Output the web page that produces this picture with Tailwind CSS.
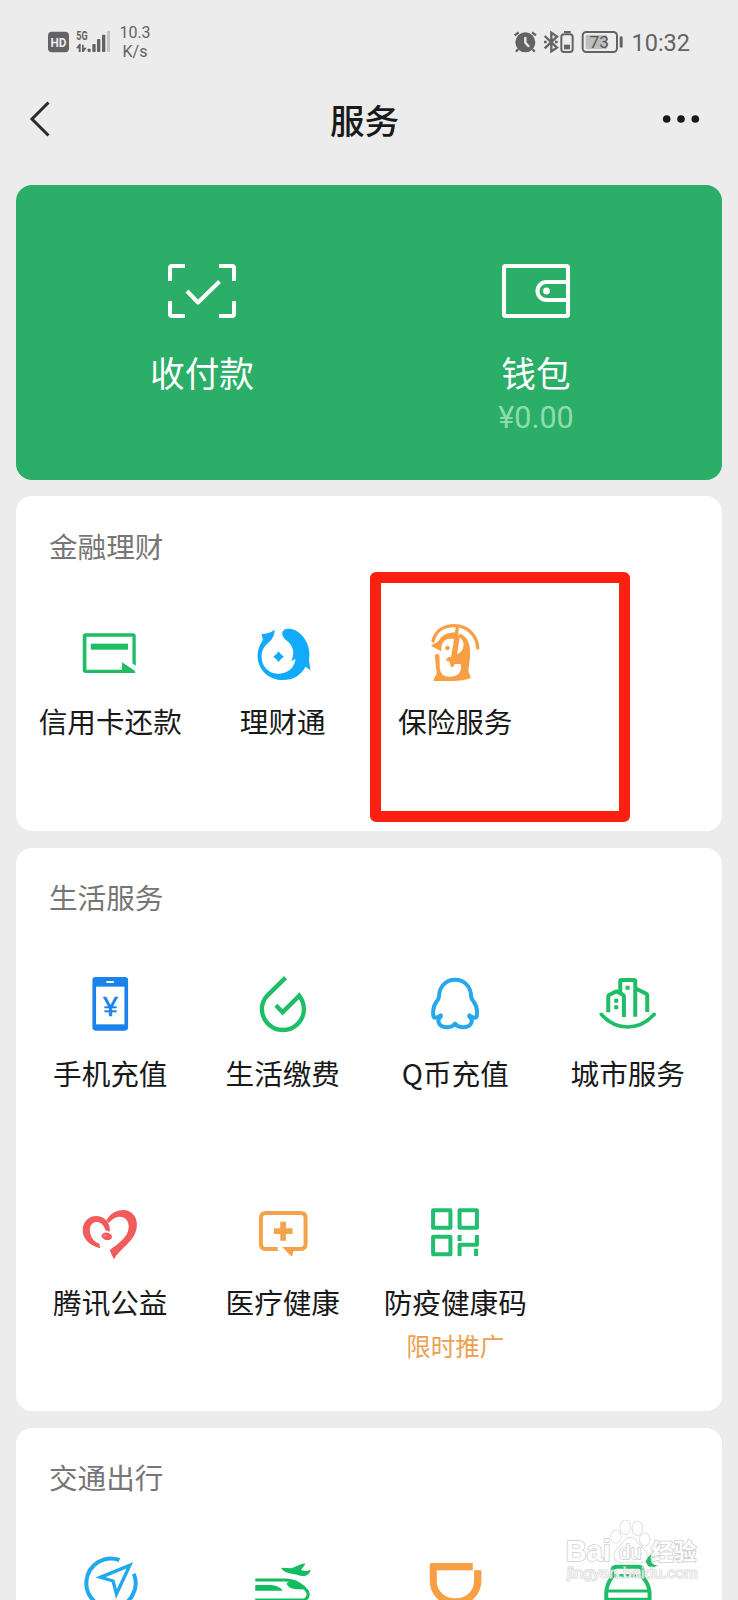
<!DOCTYPE html>
<html lang="zh-CN">
<head>
<meta charset="utf-8">
<title>服务</title>
<script src="https://cdn.jsdelivr.net/npm/@tailwindcss/browser@4"></script>
</head>
<body class="bg-[#ececec]">
<div class="relative flex h-[1600px] w-[738px] flex-col overflow-hidden bg-[#ececec] font-['Noto_Sans_CJK_SC',sans-serif] text-[#191919]">

  <!-- Status bar -->
  <header class="flex h-[84px] shrink-0 items-center justify-between pl-12 pr-[48px] font-['Roboto',sans-serif] text-[#636363]">
    <div class="flex items-center">
      <svg class="h-[34px] w-[64px]" viewBox="144 76 192 102">
        <rect x="144" y="96" width="63" height="62" rx="12" fill="#636363"/>
        <text x="175.500" y="141" font-family="Roboto" font-size="39" font-weight="700" fill="#ececec" text-anchor="middle" textLength="48" lengthAdjust="spacingAndGlyphs">HD</text>
        <text x="229" y="121" font-family="Roboto" font-size="36" font-weight="700" fill="#636363" textLength="34" lengthAdjust="spacingAndGlyphs">5G</text>
        <g fill="#636363">
          <path d="M228 146L238 132H242V157H236V146ZM246 135H251V144H260L251 157H246Z"/>
          <rect x="263" y="147" width="9" height="10" rx="2"/>
          <rect x="277" y="133" width="10" height="24" rx="2"/>
          <rect x="291" y="118" width="10" height="39" rx="2"/>
          <rect x="306" y="105" width="10" height="52" rx="2"/>
          <rect x="321" y="94" width="9" height="63" rx="2" fill="#c4c4c4"/>
        </g>
      </svg>
      <div class="ml-[7px] w-8 pt-px text-center text-[16px] leading-[18.500px]">10.3<br>K/s</div>
    </div>
    <div class="flex items-center">
      <svg class="h-[24px] w-[110px]" viewBox="435 90 330 72" fill="none" stroke="#636363">
        <circle cx="472" cy="127" r="30" fill="#636363" stroke="none"/>
        <path d="M440 106L452 97M504 106L492 97M450 148L444 155M494 148L500 155" stroke-width="7"/>
        <path d="M472 111V128L483 140" stroke="#ececec" stroke-width="7"/>
        <path d="M530 108L567 143L550 154V98L567 110L530 145" stroke-width="7"/>
        <path d="M528 126H536M561 126H569" stroke-width="7"/>
        <rect x="580" y="103" width="34" height="53" rx="8" stroke-width="6"/>
        <path d="M588 96H608" stroke-width="6"/>
        <rect x="588" y="134" width="18" height="14" fill="#636363" stroke="none"/>
        <rect x="644" y="96" width="103" height="60" rx="11" stroke-width="6"/>
        <rect x="653" y="105" width="64" height="42" rx="3" fill="#bdbdbd" stroke="none"/>
        <rect x="755" y="109" width="9" height="34" rx="4" fill="#636363" stroke="none"/>
        <text x="694" y="145" font-family="Roboto" font-size="52" fill="#555" stroke="none" text-anchor="middle">73</text>
      </svg>
      <div class="ml-2 pt-[2px] text-[23.500px] leading-7">10:32</div>
    </div>
  </header>

  <!-- Title bar -->
  <nav class="grid h-[100px] shrink-0 grid-cols-[1fr_auto_1fr] items-start pl-[28px] pr-[38px] pt-[11px]">
    <svg class="mt-1 h-10 w-6" viewBox="0 0 24 40" fill="none" stroke="#2a2a2a" stroke-width="3"><path d="M20.500 3.500L4 20L20.500 36.500"/></svg>
    <h1 class="pl-px text-[34.600px] font-medium leading-[48px]">服务</h1>
    <svg class="mt-3 h-6 w-[38px] justify-self-end" viewBox="0 0 38 24" fill="#191919"><circle cx="4.700" cy="12" r="3.800"/><circle cx="19" cy="12" r="3.800"/><circle cx="33.300" cy="12" r="3.800"/></svg>
  </nav>

  <main class="flex flex-col gap-4 px-4">
    <!-- Payment card -->
    <section class="mt-[0.500px] grid h-[295.500px] grid-cols-2 rounded-2xl bg-[#2bae67] px-[19px] pt-[75.500px] text-white">
      <div class="flex flex-col items-center">
        <svg class="h-[64px] w-[76px]" viewBox="0 0 76 64" fill="none" stroke="#fff" stroke-width="4">
          <path d="M6 21V8Q6 6 8 6H21M55 6H68Q70 6 70 8V21M70 41V54Q70 56 68 56H55M21 56H8Q6 56 6 54V41"/>
          <path d="M23 31L34 42.500L55.500 21.500" stroke-linejoin="round"/>
        </svg>
        <div class="mt-[23.500px] text-[34.700px] leading-[48px]">收付款</div>
      </div>
      <div class="flex flex-col items-center">
        <svg class="h-[64px] w-[76px]" viewBox="0 0 76 64" fill="none" stroke="#fff" stroke-width="4">
          <rect x="6" y="6" width="64" height="50" rx="1.500"/>
          <path d="M70 22H48.500A9 9 0 0 0 48.500 40H70"/>
          <circle cx="48.500" cy="31" r="3.400" fill="#fff" stroke="none"/>
        </svg>
        <div class="mt-[23.500px] text-[34.700px] leading-[48px]">钱包</div>
        <div class="mt-[2px] font-['Roboto',sans-serif] text-[30.500px] leading-10 text-[#8ddcac]">¥0.00</div>
      </div>
    </section>

    <!-- Finance -->
    <section class="relative h-[335px] rounded-2xl bg-white px-2 pt-[30px]">
      <h2 class="pl-[25px] text-[28.600px] leading-10 text-[#767676]">金融理财</h2>
      <div class="mt-[55px] grid grid-cols-4 text-[28.600px] leading-10">
        <div class="flex flex-col items-center gap-4">
          <svg class="size-16" viewBox="234.750 393 192 192" fill="#1fbd66">
            <path d="M258 430H400Q408 430 408 438V528L398 520V440H260V539H367V517L405 542Q409 549 403 549H258Q249 549 249 541V438Q249 430 258 430Z"/>
            <rect x="273" y="461" width="112" height="18"/>
          </svg>
          <span class="whitespace-nowrap">信用卡还款</span>
        </div>
        <div class="flex flex-col items-center gap-4">
          <svg class="size-16" viewBox="752.250 393 192 192" fill="#12abfc">
            <path d="M784 432Q805 432 823 419Q824 440 806 457C789 472 784 484 784 500C784 530 806 551 834 551C860 551 882 536 886 507L873 513C884 490 880 468 860 452C844 440 843 427 851 420C862 412 892 417 910 442C927 466 930 490 926 511L931 541L916 530C902 556 878 570 848 570C806 570 772 540 772 497C772 478 780 462 788 450Z"/>
            <path d="M835 484Q841 494 851 500Q841 506 835 516Q829 506 819 500Q829 494 835 484Z"/>
          </svg>
          <span>理财通</span>
        </div>
        <div class="flex flex-col items-center gap-4">
          <svg class="size-16" viewBox="162.750 393 192 192" fill="#f99f43">
            <path d="M193 453C201 420 228 407 257 407C295 407 325 435 327 474" fill="none" stroke="#f99f43" stroke-width="10" stroke-linecap="round"/>
            <path d="M189 464Q207 458 214 446C224 432 245 426 264 428C291 433 303 453 304 484C305 515 297 536 300 549Q306 556 306 564Q285 573 250 573H194Q193 565 201 557Q206 550 202 535L198 496Q206 487 212 496L213 533Q215 560 242 560C272 560 280 543 276 522H258L252 531H246L243 516L231 511L238 501H247L256 447C228 443 216 456 218 484L188 469Z"/>
            <path d="M273 442C292 456 286 485 265 493L273 442Z" fill="#fff"/>
            <path d="M266 410L261 452" stroke="#f99f43" stroke-width="10"/>
            <path d="M273 413L270 437" stroke="#fff" stroke-width="3"/>
            <circle cx="236" cy="474" r="7"/>
          </svg>
          <span>保险服务</span>
        </div>
      </div>
      <div class="absolute left-[354px] top-[75.500px] h-[250.500px] w-[260px] rounded-md border-[11.500px] border-[#fb2012]"></div>
    </section>

    <!-- Daily services -->
    <section class="mt-[1px] h-[563px] rounded-2xl bg-white px-2 pt-[29px]">
      <h2 class="pl-[25px] text-[28.600px] leading-10 text-[#767676]">生活服务</h2>
      <div class="mt-14 grid grid-cols-4 grid-rows-[120px_170px] gap-y-[109px] text-[28.600px] leading-10">
        <div class="flex flex-col items-center gap-4">
          <svg class="size-16" viewBox="234.750 399 192 192">
            <rect x="278" y="411" width="107" height="161" rx="10" fill="#1a83ea"/>
            <rect x="289" y="440" width="85" height="113" fill="#fff"/>
            <rect x="320" y="423" width="22" height="6" rx="1" fill="#fff"/>
            <text x="309" y="527" font-family="Roboto" font-size="78" fill="#1a83ea" stroke="#1a83ea" stroke-width="1" textLength="46" lengthAdjust="spacingAndGlyphs">¥</text>
          </svg>
          <span>手机充值</span>
        </div>
        <div class="flex flex-col items-center gap-4">
          <svg class="size-16" viewBox="752.250 399 192 192" fill="none" stroke="#1fbd66" stroke-width="13">
            <path d="M856 413L802 466Q785 484 785 507A63 63 0 0 0 911 507C911 490 905 478 897 467L847 517L827 496"/>
          </svg>
          <span>生活缴费</span>
        </div>
        <div class="flex flex-col items-center gap-4">
          <svg class="size-16" viewBox="162.750 399 192 192" fill="none" stroke="#26a7ee" stroke-width="12" stroke-linejoin="round" stroke-linecap="round">
            <path d="M216 526Q206 534 198 533C191 532 190 502 204 484Q210 478 211 469C211 441 231 419 259 419C287 419 307 441 307 469Q308 478 314 484C328 502 327 532 320 533Q312 534 302 526"/>
            <path d="M216 530Q206 538 210 548C214 560 228 562 237 562Q252 561 259 551Q266 561 281 562C290 562 304 560 308 548Q312 538 302 530"/>
          </svg>
          <span>Q币充值</span>
        </div>
        <div class="flex flex-col items-center gap-4">
          <svg class="size-16" viewBox="680.250 399 192 192" fill="none" stroke="#1fbd66" stroke-width="12">
            <path d="M753 461V424Q753 420 757 420H794Q798 420 798 424V530M717 517V469Q717 466 720 465L739 455Q743 454 746 456L761 464Q764 466 764 470V531M801 446L831 461Q834 463 834 466V516"/>
            <path d="M696 523Q730 561 775 561Q820 561 855 523" stroke-width="11" stroke-linecap="round"/>
            <path d="M769 443.500H781M735 482.500H747M735 501.500H747"/>
          </svg>
          <span>城市服务</span>
        </div>
        <div class="flex flex-col items-center gap-4">
          <svg class="size-16" viewBox="234.750 126 192 192" fill="#f25b5c">
            <path d="M301 265C264 255 246 231 249 204C253 176 279 162 303 170C322 177 332 194 330 215L317 211C313 193 298 183 285 187C270 192 267 211 274 228Q281 246 299 251Z"/>
            <path d="M319 184C332 155 362 146 384 152C407 160 415 184 410 208C402 247 358 268 343 298Q334 283 330 270C356 251 386 231 387 201C387 180 375 169 358 170C347 171 334 179 328 189Q326 184 319 184Z"/>
            <ellipse cx="321" cy="229" rx="16" ry="11" transform="rotate(12 321 229)"/>
            <path d="M311 225Q315 230 320 226" fill="none" stroke="#fff" stroke-width="1.500"/>
          </svg>
          <span>腾讯公益</span>
        </div>
        <div class="flex flex-col items-center gap-4">
          <svg class="size-16" viewBox="752.250 126 192 192" fill="#f5a34b">
            <path d="M832 267H797Q782 267 782 252V174Q782 159 797 159H901Q916 159 916 174V252Q916 267 901 267H858" fill="none" stroke="#f5a34b" stroke-width="12"/>
            <path d="M820 261L836 273H820ZM846 261H882L876 288Q872 289 868 284Z"/>
            <path d="M840 185H857V205H877V222H857V242H840V222H821V205H840Z"/>
          </svg>
          <span>医疗健康</span>
        </div>
        <div class="flex flex-col items-center gap-4">
          <svg class="size-16 shrink-0" viewBox="162.750 126 192 192" fill="none" stroke="#22bd6f" stroke-width="12" stroke-linejoin="round">
            <rect x="193" y="151" width="52" height="52"/><rect x="272.500" y="151" width="52" height="52"/><rect x="193" y="230.500" width="52" height="52"/>
            <path d="M324.500 225V254H272.500V288M272.500 225V243M322 266V288"/>
          </svg>
          <span class="whitespace-nowrap">防疫健康码</span>
          <span class="-mt-[10px] text-[24.500px] leading-9 text-[#eda04f]">限时推广</span>
        </div>
      </div>
    </section>

    <!-- Transport -->
    <section class="mt-px h-[335px] rounded-2xl bg-white px-2 pt-[29px]">
      <h2 class="pl-[25px] text-[28.600px] leading-10 text-[#767676]">交通出行</h2>
      <div class="mt-14 grid grid-cols-4">
        <div class="flex justify-center">
          <svg class="size-16" viewBox="234.750 399 192 192" fill="none" stroke="#23a8ef">
            <path d="M359 420A74 74 0 1 0 402 461" stroke-width="12"/>
            <path d="M390 436L302 472L340 483L350 522Z" stroke-width="10"/>
          </svg>
        </div>
        <div class="flex justify-center">
          <svg class="size-16" viewBox="752.250 399 192 192" fill="#12bc61">
            <path d="M842 443L874 445L906 431H916L902 450L917 454L931 449Q929 462 916 467Q905 470 890 464L864 459Q847 453 842 443Z"/>
            <path d="M765 480H855C885 480 910 496 922 515Q928 532 912 540H765" fill="none" stroke="#12bc61" stroke-width="9"/>
            <path d="M765 495H810Q838 497 848 512H765ZM860 488Q884 480 899 491L915 508Q895 509 877 506Q858 499 860 488Z"/>
          </svg>
        </div>
        <div class="flex justify-center">
          <svg class="size-16" viewBox="162.750 399 192 192" fill="#f99f43">
            <path fill-rule="evenodd" d="M183 434Q183 429 188 429H312V451H338V480C338 530 300 556 260 556C220 556 183 530 183 480ZM204 451V482C204 515 230 535 260 535C290 535 316 515 316 482V451Z"/>
          </svg>
        </div>
        <div class="flex justify-center">
          <svg class="size-16" viewBox="680.250 399 192 192" fill="none" stroke="#1fbd66" stroke-width="12">
            <path d="M729 474V453Q729 440 742 440H808Q820 440 820 453V474M729 470Q711 495 711 520V560M820 470Q841 495 841 520V560"/>
            <path d="M711 513H841M711 538H841" stroke-width="9"/>
            <path d="M736 467H744M750 467H764M770 467H780M786 467H800M805 467H812" stroke-width="10"/>
            <path d="M846 402Q839 436 866 436Q850 447 837 438Q820 423 846 402Z" fill="#1fbd66" stroke="none"/>
          </svg>
        </div>
      </div>
    </section>
  </main>

  <!-- Watermark overlay -->
  <svg class="absolute left-[560px] top-[1515px] h-[75px] w-[145px]" viewBox="573 285 435 225" fill="#fff" stroke="#cfcfcf" stroke-width="5" paint-order="stroke">
    <g fill-opacity=".9" stroke-width="3.500">
      <ellipse cx="741" cy="350" rx="15" ry="19"/><ellipse cx="769" cy="322" rx="15" ry="21"/><ellipse cx="805" cy="325" rx="15" ry="21"/><ellipse cx="827" cy="358" rx="15" ry="19"/>
      <path d="M783 353C765 353 760 376 745 385C732 398 732 422 752 427C765 431 773 425 785 425C798 425 806 431 820 427C840 420 837 397 822 385C808 376 802 353 783 353Z"/>
    </g>
    <g font-family="'Liberation Sans'" font-weight="700">
      <text x="591" y="424" font-size="87" textLength="134" lengthAdjust="spacingAndGlyphs">Bai</text>
      <text x="750" y="416" font-size="58" font-weight="400" textLength="68" lengthAdjust="spacingAndGlyphs">du</text>
    </g>
    <text x="846" y="419" font-family="'Noto Sans CJK SC'" font-weight="700" font-size="68">经验</text>
    <text x="594" y="475" font-family="'Liberation Sans'" font-size="42" fill-opacity=".6" stroke-width="4" stroke-opacity=".7" textLength="392" lengthAdjust="spacingAndGlyphs">jingyan.baidu.com</text>
  </svg>
</div>
</body>
</html>
